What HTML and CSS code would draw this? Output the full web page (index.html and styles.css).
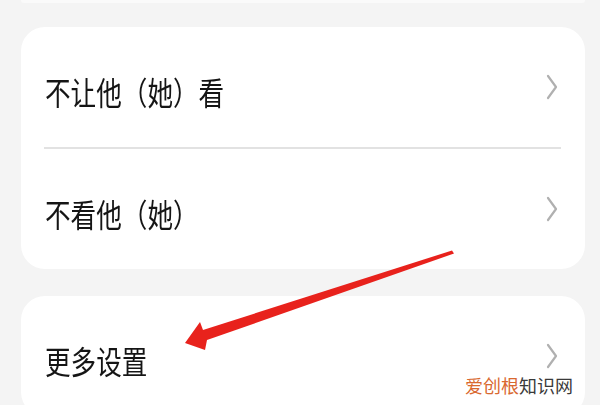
FILE: index.html
```html
<!DOCTYPE html>
<html lang="zh-CN">
<head>
  <meta charset="UTF-8" />
  <title>隐私设置</title>
  <link rel="stylesheet" href="styles.css">
</head>
<body>

  <div class="page">
    <!-- 上一组卡片，只露出底边 -->
    <div class="card card-top"></div>

    <div class="card">
      <div class="row">
        <span class="label">不让他（她）看</span>
        <svg class="chevron" width="12" height="26" viewBox="0 0 12 26"><polyline points="2,2 10,13 2,24" /></svg>
      </div>
      <div class="divider"></div>
      <div class="row">
        <span class="label">不看他（她）</span>
        <svg class="chevron" width="12" height="26" viewBox="0 0 12 26"><polyline points="2,2 10,13 2,24" /></svg>
      </div>
    </div>

    <div class="card">
      <div class="row">
        <span class="label">更多设置</span>
        <svg class="chevron" width="12" height="26" viewBox="0 0 12 26"><polyline points="2,2 10,13 2,24" /></svg>
      </div>
    </div>
  </div>

  <!-- 红色标注箭头 -->
  <svg class="arrow" width="600" height="405" viewBox="0 0 600 405">
    <defs>
      <filter id="soft"><feGaussianBlur stdDeviation="0.6" /></filter>
    </defs>
    <polygon points="452,250.5 454,253.5 207,340 205,350 185,343 200,322 203,330" fill="#e8211d" filter="url(#soft)" />
  </svg>

  <div class="watermark"><span class="brand">爱创根</span>知识网</div>

</body>
</html>
```

FILE: styles.css
```css
body {
  margin: 0;
  background: #f4f4f4;
  font-family: "Noto Sans CJK SC", "Noto Sans", sans-serif;
  color: #151515;
  height: 405px;
  overflow: hidden;
  position: relative;
}
.page {
  padding: 0 15px 0 21px;
}
.card {
  background: #fff;
  border-radius: 24px;
  margin-top: 27px;
}
.card-top {
  height: 3px;
  margin-top: 0;
  border-radius: 0 0 24px 24px;
  background: #fafafa;
}
.card-top + .card {
  margin-top: 24px;
}
.row {
  height: 120px;
  display: flex;
  align-items: center;
  justify-content: space-between;
  padding: 0 27px 0 24px;
}
.label {
  font-size: 32px;
  line-height: 40px;
  padding-top: 7px;
  transform: scaleX(0.8);
  transform-origin: left center;
  white-space: nowrap;
}
.chevron {
  fill: none;
  stroke: #b0b0b0;
  stroke-width: 2.2;
  stroke-linecap: round;
  stroke-linejoin: round;
}
.divider {
  height: 2px;
  background: #e2e2e2;
  margin: 0 24px 0 23px;
}
.arrow {
  position: absolute;
  left: 0;
  top: 0;
}
.watermark {
  position: absolute;
  right: 27px;
  top: 374px;
  font-size: 18px;
  line-height: 22px;
  color: #3a3a3a;
}
.brand {
  color: #d9682f;
}
```
